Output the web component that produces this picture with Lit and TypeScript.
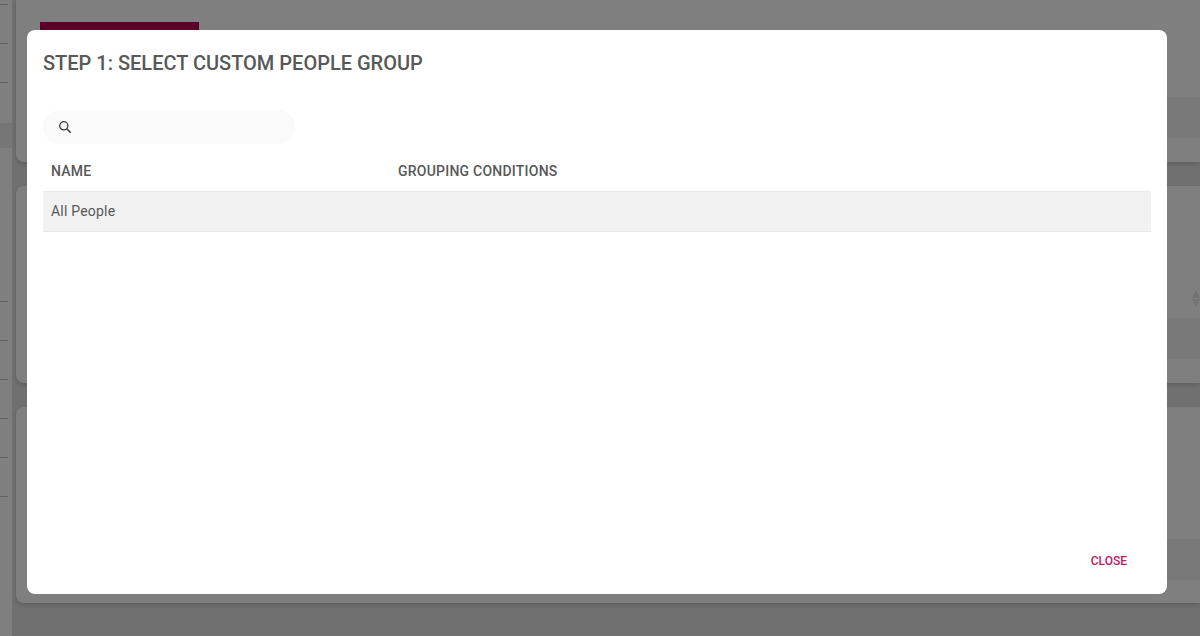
import { LitElement, html, css, svg } from "lit";
import { customElement } from "lit/decorators.js";

// heights of the rail rows behind the dialog, the 219 one skips the rows without a rule
const railRows = [5, 39, 39, 219, 39, 39, 39, 39, 39];

@customElement("app-root")
export class AppRoot extends LitElement {
  static styles = css`
    :host {
      display: block;
      width: 1200px;
      height: 636px;
      overflow: hidden;
      position: relative;
      font-family: Roboto, "Liberation Sans", sans-serif;
    }
    .page {
      display: flex;
      height: 636px;
      background: #e0e0e0;
    }
    .rail {
      width: 12px;
      flex: none;
      background: #fff;
      position: relative;
    }
    .rail-row {
      width: 8px;
      border-bottom: 1px solid #c4c4c4;
      box-sizing: border-box;
    }
    .rail-active {
      position: absolute;
      left: 0;
      top: 123px;
      width: 12px;
      height: 25px;
      background: #ededed;
    }
    .content {
      flex: 1;
      min-width: 0;
      padding-left: 4px;
      display: flex;
      flex-direction: column;
      gap: 24px;
    }
    .card {
      background: #fff;
      border-radius: 8px 0 0 8px;
      box-shadow: 0 2px 4px rgba(0, 0, 0, 0.16);
      height: 197px;
      flex: none;
      position: relative;
      box-sizing: border-box;
      padding-top: 132px;
    }
    .card.first {
      height: 162px;
      border-radius: 0 0 0 8px;
      padding: 22px 0 0 24px;
    }
    .card.last {
      height: 196px;
    }
    .cta {
      width: 159px;
      height: 40px;
      background: #b0004e;
    }
    .band {
      background: #f2f2f2;
      height: 41px;
      margin-left: 16px;
    }
    .card.first .band {
      margin: 35px 0 0 0;
    }
    .sort {
      position: absolute;
      right: 0;
      top: 104px;
      width: 8px;
      height: 17px;
    }
    .scrim {
      position: absolute;
      inset: 0;
      background: rgba(0, 0, 0, 0.5);
    }
    .dialog {
      position: absolute;
      left: 27px;
      top: 30px;
      width: 1140px;
      height: 564px;
      box-sizing: border-box;
      background: #fff;
      border-radius: 8px;
      padding: 0 16px;
      display: flex;
      flex-direction: column;
      color: #585858;
    }
    h2 {
      margin: 0;
      padding-top: 21px;
      font-size: 20px;
      line-height: 24px;
      font-weight: 500;
      color: #585858;
    }
    .search {
      margin-top: 35px;
      width: 252px;
      height: 34px;
      flex: none;
      border-radius: 17px;
      background: #fafafa;
      display: flex;
      align-items: center;
      padding-left: 15px;
      box-sizing: border-box;
    }
    .search svg {
      width: 14px;
      height: 14px;
      display: block;
    }
    .row {
      display: grid;
      grid-template-columns: 347px 1fr;
      padding: 0 8px;
      font-size: 14px;
      align-items: center;
    }
    .head {
      margin-top: 8px;
      height: 38px;
      padding-bottom: 1px;
      font-weight: 500;
      letter-spacing: 0.23px;
      border-bottom: 1px solid #eaeaea;
    }
    .body {
      height: 38px;
      padding-bottom: 1px;
      background: #f2f2f2;
      border-bottom: 1px solid #e8e8e8;
      letter-spacing: 0.2px;
    }
    .actions {
      margin-top: auto;
      display: flex;
      justify-content: flex-end;
      padding: 0 8px 23px 0;
    }
    .close {
      border: 0;
      background: none;
      padding: 0 16px;
      font: 500 12px/20px Roboto, "Liberation Sans", sans-serif;
      color: #c2185f;
    }
  `;

  render() {
    return html`
      <div class="page">
        <div class="rail">
          <div class="rail-active"></div>
          ${railRows.map((h) => html`<div class="rail-row" style="height:${h}px"></div>`)}
        </div>
        <div class="content">
          <div class="card first">
            <div class="cta"></div>
            <div class="band"></div>
          </div>
          <div class="card">
            <svg class="sort" viewBox="0 0 8 17">
              ${svg`<path d="M4 0l4 8H0zM4 17l4-8H0z" fill="#e6e6e6" />`}
            </svg>
            <div class="band"></div>
          </div>
          <div class="card last"><div class="band"></div></div>
        </div>
      </div>
      <div class="scrim"></div>
      <div class="dialog">
        <h2>STEP 1: SELECT CUSTOM PEOPLE GROUP</h2>
        <div class="search">
          <svg viewBox="0 0 14 14" fill="none" stroke="#3c3c3c" stroke-width="1.3">
            <circle cx="5.8" cy="5.8" r="4.1" />
            <path d="M8.8 8.8l3.9 3.9" stroke-width="1.6" />
          </svg>
        </div>
        <div class="row head"><span>NAME</span><span>GROUPING CONDITIONS</span></div>
        <div class="row body"><span>All People</span><span></span></div>
        <div class="actions"><button class="close">CLOSE</button></div>
      </div>
    `;
  }
}
